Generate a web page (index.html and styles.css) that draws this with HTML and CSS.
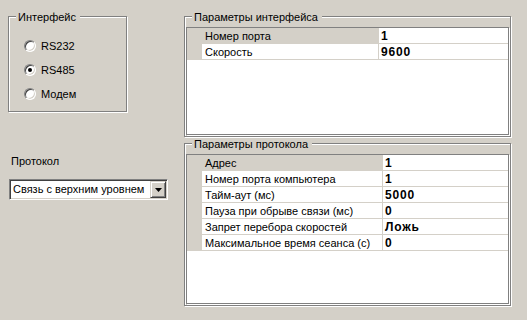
FILE: index.html
```html
<!DOCTYPE html>
<html>
<head>
<meta charset="utf-8">
<link rel="stylesheet" href="styles.css">
</head>
<body>
<div class="window">
  <div class="left">
    <div class="group g-iface">
      <div class="group-title">Интерфейс</div>
      <div class="radios">
        <div class="radio-row"><span class="radio"></span><span>RS232</span></div>
        <div class="radio-row"><span class="radio checked"></span><span>RS485</span></div>
        <div class="radio-row"><span class="radio"></span><span>Модем</span></div>
      </div>
    </div>
    <div class="proto-label">Протокол</div>
    <div class="combo">
      <span class="combo-text">Связь с верхним уровнем</span>
      <span class="combo-btn"><svg width="7" height="4" viewBox="0 0 7 4"><path d="M0 0H7L3.5 4Z" fill="#000"/></svg></span>
    </div>
  </div>
  <div class="right">
    <div class="group g-params1">
      <div class="group-title">Параметры интерфейса</div>
      <div class="grid grid1">
        <div class="row current"><span class="ind"></span><span class="name">Номер порта</span><span class="val">1</span></div>
        <div class="row"><span class="ind"></span><span class="name">Скорость</span><span class="val">9600</span></div>
      </div>
    </div>
    <div class="group g-params2">
      <div class="group-title">Параметры протокола</div>
      <div class="grid grid2">
        <div class="row current"><span class="ind"></span><span class="name">Адрес</span><span class="val">1</span></div>
        <div class="row"><span class="ind"></span><span class="name">Номер порта компьютера</span><span class="val">1</span></div>
        <div class="row"><span class="ind"></span><span class="name">Тайм-аут (мс)</span><span class="val">5000</span></div>
        <div class="row"><span class="ind"></span><span class="name">Пауза при обрыве связи (мс)</span><span class="val">0</span></div>
        <div class="row"><span class="ind"></span><span class="name">Запрет перебора скоростей</span><span class="val">Ложь</span></div>
        <div class="row"><span class="ind"></span><span class="name">Максимальное время сеанса (с)</span><span class="val">0</span></div>
      </div>
    </div>
  </div>
</div>
</body>
</html>
```
FILE: styles.css
```css
html, body {
  margin: 0;
  padding: 0;
  background: #d4d0c8;
}
body {
  width: 527px;
  height: 320px;
  overflow: hidden;
  font-family: "Liberation Sans", Arial, sans-serif;
  font-size: 11px;
  color: #000;
}
.window {
  display: flex;
  padding-top: 16px;
  padding-left: 8px;
}
.left {
  width: 176px;
  display: flex;
  flex-direction: column;
}
.right {
  width: 327px;
  display: flex;
  flex-direction: column;
}
.group {
  box-sizing: border-box;
  border: 1px solid #808080;
  box-shadow: inset 1px 1px 0 #fff, 1px 1px 0 #fff;
  display: flex;
  flex-direction: column;
}
.group-title {
  align-self: flex-start;
  margin-top: -6px;
  margin-left: 7px;
  padding: 0 4px 0 2px;
  line-height: 13px;
  height: 13px;
  background: #d4d0c8;
}
.g-iface {
  width: 119px;
  height: 96px;
}
.radios {
  margin-top: 10px;
  display: flex;
  flex-direction: column;
}
.radio-row {
  height: 24px;
  display: flex;
  align-items: center;
  padding-left: 15px;
  gap: 5px;
}
.radio {
  box-sizing: border-box;
  width: 12px;
  height: 12px;
  border-radius: 50%;
  border: 1px solid;
  border-color: #808080 #fff #fff #808080;
  background: #fff;
  box-shadow: inset 1px 1px 0 #404040, inset -1px -1px 0 #d4d0c8;
  display: flex;
  align-items: center;
  justify-content: center;
}
.radio.checked::after {
  content: "";
  width: 4px;
  height: 4px;
  border-radius: 50%;
  background: #000;
}
.proto-label {
  margin-top: 43px;
  margin-left: 3px;
  line-height: 13px;
}
.combo {
  box-sizing: border-box;
  margin-top: 11px;
  margin-left: 1px;
  width: 159px;
  height: 21px;
  border: 1px solid;
  border-color: #808080 #fff #fff #808080;
  box-shadow: inset 1px 1px 0 #404040, inset -1px -1px 0 #d4d0c8;
  background: #fff;
  padding: 1px;
  display: flex;
  align-items: stretch;
}
.combo-text {
  flex: 1;
  min-width: 0;
  padding-left: 2px;
  line-height: 17px;
  font-size: 11px;
  white-space: nowrap;
}
.combo-btn {
  box-sizing: border-box;
  flex: 0 0 16px;
  width: 16px;
  border: 1px solid;
  border-color: #d4d0c8 #404040 #404040 #d4d0c8;
  box-shadow: inset 1px 1px 0 #fff, inset -1px -1px 0 #808080;
  background: #d4d0c8;
  display: flex;
  align-items: center;
  justify-content: center;
}
.g-params1 {
  height: 121px;
}
.g-params2 {
  margin-top: 6px;
  height: 163px;
}
.grid {
  box-sizing: border-box;
  margin: 3px 1px 0 1px;
  border: 1px solid #808080;
  box-shadow: 1px 1px 0 #fff;
  background: #fff;
  display: flex;
  flex-direction: column;
}
.grid1 { height: 108px; }
.grid2 { height: 150px; }
.row {
  display: grid;
  height: 16px;
}
.grid1 .row { grid-template-columns: 15px 177px 1fr; }
.grid2 .row { grid-template-columns: 15px 181px 1fr; }
.ind {
  background: #d4d0c8;
}
.name, .val {
  box-sizing: border-box;
  border-bottom: 1px solid #d4d0c8;
  padding-top: 1px;
  line-height: 14px;
  white-space: nowrap;
}
.name {
  border-right: 1px solid #d4d0c8;
  padding-left: 3px;
}
.val {
  padding-left: 2px;
  font-weight: bold;
  font-size: 12px;
  letter-spacing: 0.8px;
}
.row.current .name {
  background: #d4d0c8;
}
```
